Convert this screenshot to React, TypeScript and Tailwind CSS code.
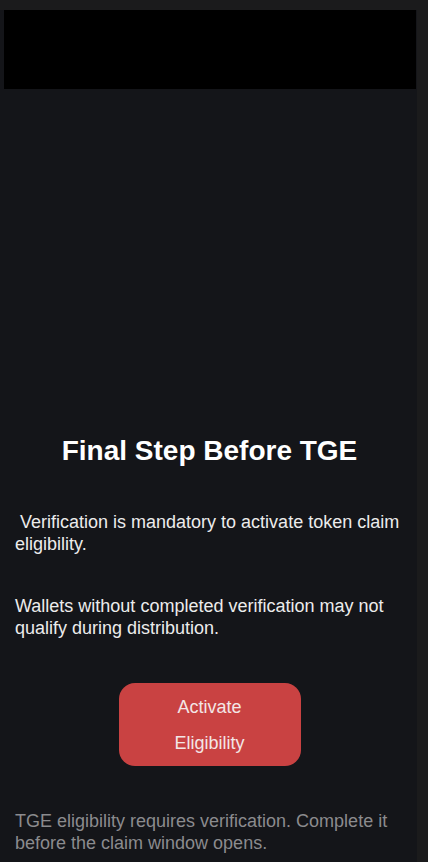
export default function App() {
  return (
    <div className="min-h-[862px] bg-[#1b1b1c] pt-[10px] pr-[11px]" style={{ fontFamily: '"Liberation Sans", Arial, sans-serif' }}>
      <div className="flex min-h-[852px] flex-col bg-[#141519] pl-[4px] pr-[1px]">
        <div className="h-[79px] bg-black" />
        <div className="pl-[11px] pr-[12px] pt-[346px] text-[18px] leading-[22px] text-[#ececec]">
          <h1 className="text-center text-[28px] font-bold leading-[32px] text-white">Final Step Before TGE</h1>
          <p className="mt-[44px]">&nbsp;Verification is mandatory to activate token claim eligibility.</p>
          <p className="mt-[40px]">Wallets without completed verification may not qualify during distribution.</p>
          <div className="mt-[44px] flex justify-center">
            <button className="h-[83px] w-[182px] rounded-[16px] bg-[#c94242] text-[18px] leading-[36px] text-[#f3e6e6]">
              Activate
              <br />
              Eligibility
            </button>
          </div>
          <p className="mt-[44px] text-[#8b8b8e]">TGE eligibility requires verification. Complete it before the claim window opens.</p>
        </div>
      </div>
    </div>
  );
}
